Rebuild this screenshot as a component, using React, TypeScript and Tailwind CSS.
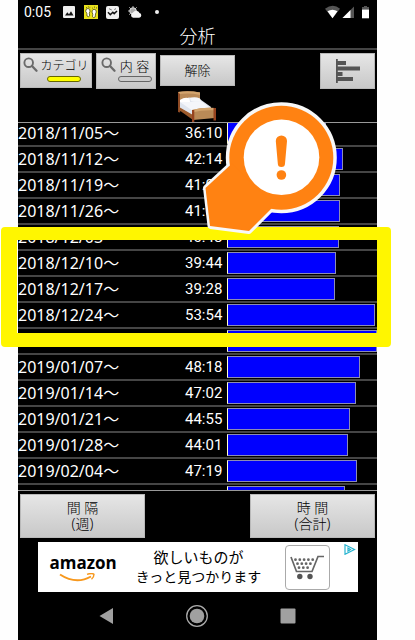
import React from "react";
import clsx from "clsx";

type WeekEntry = {
  date: string;
  time: string;
};

const weeks: WeekEntry[] = [
  { date: "2018/11/05", time: "36:10" },
  { date: "2018/11/12", time: "42:14" },
  { date: "2018/11/19", time: "41:02" },
  { date: "2018/11/26", time: "41:05" },
  { date: "2018/12/03", time: "40:48" },
  { date: "2018/12/10", time: "39:44" },
  { date: "2018/12/17", time: "39:28" },
  { date: "2018/12/24", time: "53:54" },
  { date: "2018/12/31", time: "54:36" },
  { date: "2019/01/07", time: "48:18" },
  { date: "2019/01/14", time: "47:02" },
  { date: "2019/01/21", time: "44:55" },
  { date: "2019/01/28", time: "44:01" },
  { date: "2019/02/04", time: "47:19" },
  { date: "2019/02/11", time: "42:59" },
];

const MAX_MINUTES = 3276;

const toMinutes = (time: string) => {
  const [hours, minutes] = time.split(":").map(Number);
  return hours * 60 + minutes;
};

const StatusBar = () => (
  <div className="flex h-6 items-center justify-between pl-1.5 pr-1.5 text-white">
    <div className="flex items-center">
      <span className="w-[39px] font-['Roboto'] text-sm leading-6">0:05</span>
      <svg width="12" height="12" viewBox="0 0 12 12">
        <rect width="12" height="12" rx="1" fill="#eee" />
        <path d="M2 9.5 4.3 6.3 6 8.2 8 5.3 10.5 9.5Z" fill="#111" />
      </svg>
      <svg className="ml-[9px]" width="14" height="14" viewBox="0 0 14 14">
        <rect width="14" height="14" fill="#e9e21c" />
        <g fill="#fff" stroke="#5d5a16" strokeWidth="0.9">
          <path d="M2 4.5Q4 2.5 5.7 4.3 6.5 6.5 5.3 8.2L5.7 11Q4.2 12.5 3 11L2.8 8.2Q1 6.5 2 4.5Z" />
          <path d="M8.3 5.3Q10 3.2 12 5.2 12.8 7 11.5 9L11.2 12Q9.7 13.3 8.5 11.8L8.8 9.2Q7.5 7 8.3 5.3Z" />
        </g>
        <path
          d="M2 2.6h.8M3.9 1.8h.8M5.6 2.4h.6M8.3 3.1h.6M10 2.2h.8M12 2.9h.8"
          stroke="#5d5a16"
          strokeWidth="1.2"
        />
      </svg>
      <svg className="ml-2" width="13" height="13" viewBox="0 0 13 13">
        <rect width="13" height="13" rx="2" fill="#eee" />
        <path
          d="M2 6.3 4.3 8.7 6.8 6.2 8.2 7.6 11 5"
          fill="none"
          stroke="#111"
          strokeWidth="1.5"
        />
        <path d="M3 2.7 5.8 4M8.3 3.5 10 2.7" stroke="#555" strokeWidth="0.8" />
      </svg>
      <svg className="ml-[9px]" width="14" height="13" viewBox="0 0 14 13">
        <circle cx="5" cy="5" r="3.3" fill="#aaa" stroke="#ddd" />
        <path
          d="M5 .2v1.2M.2 5h1.2M1.4 1.4l1 1M8.6 1.4l-1 1M1.3 8.5l1-.8"
          stroke="#ddd"
        />
        <path
          d="M5.2 11.8a2.8 2.8 0 0 1-.2-5.4 3.6 3.6 0 0 1 6.5.7 2.4 2.4 0 0 1-.3 4.7Z"
          fill="#f4f4f4"
        />
      </svg>
      <svg className="ml-[13px]" width="4" height="4" viewBox="0 0 4 4">
        <circle cx="2" cy="2" r="2" fill="#eee" />
      </svg>
    </div>
    <svg width="46" height="14" viewBox="0 0 46 14">
      <path d="M0 3.7Q8 -2 15 3.7L7.5 13.3Z" fill="#555" />
      <path d="M2.5 6.3Q7.5 3 12.5 6.3L7.5 13.3Z" fill="#fff" />
      <path d="M29 1.5V13H17.5Z" fill="#555" />
      <path d="M25.5 5V13H17.5Z" fill="#fff" />
      <path d="M37 4.5V2h2V1h3v1h2v2.5Z" fill="#555" />
      <path d="M37 4.5h7V13.3h-7Z" fill="#fff" />
    </svg>
  </div>
);

type GrayButtonProps = {
  children: React.ReactNode;
  className?: string;
  label?: string;
};

const GrayButton = ({ children, className, label }: GrayButtonProps) => (
  <button
    type="button"
    aria-label={label}
    className={clsx(
      "border border-[#b9b9b9] bg-gradient-to-b from-[#e6e6e6] to-[#c8c8c8] font-light text-black",
      className
    )}
  >
    {children}
  </button>
);

const SearchIcon = () => (
  <svg
    className="mt-[3px] shrink-0"
    width="15"
    height="15"
    viewBox="0 0 15 15"
    fill="none"
    stroke="#6b6b6b"
  >
    <circle cx="5.7" cy="5.7" r="4.3" strokeWidth="1.9" />
    <path d="M9 9 13.5 13.7" strokeWidth="2.3" strokeLinecap="round" />
  </svg>
);

const BedIcon = () => (
  <svg width="40" height="32" viewBox="0 0 40 32">
    <path d="M1 2Q12 .5 23 2.5V12L4 21 1 22Z" fill="#b98a57" />
    <path d="M1 2Q12 .5 23 2.5V5Q12 2.5 1 4.3Z" fill="#d3a56e" />
    <path d="M1 2V22l2 .6V4Z" fill="#8e4a24" />
    <path d="M3 10 12 7.5 22 8.5 34 17 33 21 16 26 3 18Z" fill="#dfe5ee" />
    <path d="M3 10Q8 6.5 12.5 8.5L13 12Q8 13 3 12Z" fill="#fff" />
    <path d="M13 8Q18 6.5 23 8.5L24 11Q18 12.5 14 11Z" fill="#f5f7fa" />
    <path d="M3 12 13 12 24 11 33 18 16 21Z" fill="#f4f6fa" />
    <path d="M2 17 16 25V30L2 20Z" fill="#9b5a2c" />
    <path d="M15 20Q26 17 38 18V28L16 30Z" fill="#b98a57" />
    <path d="M15 20Q26 17 38 18V20.3Q26 19.5 15 22.5Z" fill="#d3a56e" />
    <path d="M15 20h2.3V32H15ZM36.5 18H39V30.5h-2.5Z" fill="#96431f" />
  </svg>
);

const WeekRow = ({ date, time }: WeekEntry) => (
  <tr className="flex h-[26px] border-b-2 border-[#454545]">
    <th
      scope="row"
      className="flex-1 whitespace-nowrap text-left text-base font-normal leading-6"
    >
      {date}〜
    </th>
    <td className="w-[42px] font-['Roboto'] text-[15px] leading-6">{time}</td>
    <td className="w-[150px] py-px">
      <div
        className="h-[22px] border border-[#8c8cb4] border-l-[#ffffd0] bg-[#0000ff]"
        style={{ width: `${(toMinutes(time) / MAX_MINUTES) * 100}%` }}
      />
    </td>
  </tr>
);

const Pointer = () => (
  <svg
    className="absolute left-[200px] top-[98px]"
    width="142"
    height="142"
    viewBox="200 98 142 142"
  >
    <g stroke="#f8f8f8" strokeWidth="6" strokeLinejoin="round" fill="#f8f8f8">
      <circle cx="281.3" cy="157.7" r="52.5" />
      <path d="M232 164 206 188 210.5 226 249 231 272 208Z" />
    </g>
    <g fill="#ff8212">
      <circle cx="281.3" cy="157.7" r="52" />
      <path d="M232 163.5 205.5 188 210 226 249 231 274 206Z" />
    </g>
    <circle cx="281.5" cy="157.3" r="37.8" fill="#fff" />
    <path
      d="M275.8 141a5.6 5.6 0 0 1 11.2 0L285 163.5a3.6 3.6 0 0 1-7.2 0Z"
      fill="#ff8212"
    />
    <circle cx="281.4" cy="175" r="4.8" fill="#ff8212" />
  </svg>
);

const AdBanner = () => (
  <a
    href="#ad"
    className="mx-auto flex h-[50px] w-80 items-center bg-white pl-3 text-black"
  >
    <span className="flex w-[70px] flex-col">
      <span className="font-['Open_Sans'] text-[17px] font-bold leading-5">
        amazon
      </span>
      <svg width="50" height="9" viewBox="-8 0 50 9" fill="none" stroke="#f7981d">
        <path d="M2 1.5Q18 12 33 3.5" strokeWidth="2" />
        <path d="M29 1.3Q34-.3 36 1.3 36 4 33.5 6.3" strokeWidth="1.4" />
      </svg>
    </span>
    <span className="flex w-[158px] flex-col items-center whitespace-nowrap text-sm leading-5">
      <span className="text-[15px]">欲しいものが</span>
      <span>きっと見つかります</span>
    </span>
    <span className="ml-[7px] flex h-[45px] w-[45px] items-center justify-center rounded border border-[#aaa]">
      <svg width="35" height="26" viewBox="0 0 35 26">
        <path
          d="M1 3 6.5 17.5H22L28 2.5H34"
          fill="none"
          stroke="#666"
          strokeWidth="1.7"
        />
        <path
          d="M5.5 5.7H25M7.5 9.7H23M9 13.7H21.5"
          stroke="#666"
          strokeWidth="2.8"
          strokeLinecap="round"
          strokeDasharray="0 4.3"
        />
        <circle cx="9.8" cy="22.5" r="2.7" fill="#555" />
        <circle cx="20" cy="22.5" r="2.7" fill="#555" />
      </svg>
    </span>
    <svg
      className="ml-3.5 mt-0.5 self-start"
      width="12"
      height="11"
      viewBox="0 0 12 11"
      fill="none"
      stroke="#28b4d0"
      strokeWidth="1.2"
    >
      <path d="M1 .8 10.5 5.5 1 10.3Z" />
      <path d="M4 4V7.2L6.5 5.6Z" />
    </svg>
  </a>
);

const NavBar = () => (
  <nav className="flex flex-1 items-center justify-between pl-20 pr-[81px]">
    <button type="button" aria-label="Back">
      <svg width="16" height="18" viewBox="0 0 16 18">
        <path d="M15 1V17L1.5 9Z" fill="#a0a0a0" />
      </svg>
    </button>
    <button type="button" aria-label="Home">
      <svg width="24" height="24" viewBox="0 0 24 24">
        <circle cx="12" cy="12" r="10.3" fill="none" stroke="#aaa" strokeWidth="1.3" />
        <circle cx="12" cy="12" r="7.3" fill="#a0a0a0" />
      </svg>
    </button>
    <button type="button" aria-label="Recent apps">
      <svg width="16" height="16" viewBox="0 0 16 16">
        <rect x=".5" y=".5" width="15" height="15" rx="1" fill="#a0a0a0" />
      </svg>
    </button>
  </nav>
);

const App = () => {
  return (
    <div className="relative min-h-screen bg-[#fefefe] pl-[18px] pr-[38px] font-['Noto_Sans','Noto_Sans_CJK_JP',sans-serif]">
      <div className="flex min-h-screen flex-col bg-black text-white">
        <StatusBar />
        <h1 className="h-6 text-center text-lg font-light leading-6">分析</h1>

        {/* Filters */}
        <div className="flex h-[41px] items-start border-t-2 border-[#444] px-0.5 pt-[3px]">
          <GrayButton className="flex h-[35px] w-[72px] items-start justify-center gap-0.5">
            <SearchIcon />
            <span className="flex flex-col items-center whitespace-nowrap pt-1 text-xs leading-4">
              カテゴリ
              <span className="mt-0.5 h-1.5 w-[34px] rounded-sm border border-[#666600] bg-[#ffff00]" />
            </span>
          </GrayButton>
          <GrayButton className="ml-1 flex h-9 w-[60px] items-start justify-center gap-0.5">
            <SearchIcon />
            <span className="flex flex-col items-center whitespace-nowrap pt-1 text-[13px] leading-4">
              内 容
              <span className="mt-0.5 h-1.5 w-[34px] rounded-sm border border-[#666] bg-[#ccc]" />
            </span>
          </GrayButton>
          <GrayButton className="ml-1 mt-0.5 h-[31px] w-[75px] text-[13px]">
            解除
          </GrayButton>
          <GrayButton
            label="グラフ"
            className="ml-auto flex h-[36px] w-[55px] items-center justify-center"
          >
            <svg width="26" height="24" viewBox="0 0 26 24" fill="#555">
              <path d="M1 0h1.8v24H1ZM2 2h9v4H2ZM2 7.5h23v4H2ZM2 13h5.5v4H2ZM2 18h16v4H2Z" />
            </svg>
          </GrayButton>
        </div>

        <div className="flex h-[34px] items-end border-b border-[#999] pl-[159px]">
          <BedIcon />
        </div>

        {/* Weekly totals, scrolled slightly past the first row */}
        <div className="h-[367px] overflow-hidden">
          <table className="-mt-0.5 block w-full">
            <tbody className="block">
              {weeks.map((week) => (
                <WeekRow key={week.date} date={week.date} time={week.time} />
              ))}
            </tbody>
          </table>
        </div>

        <div className="flex h-[52px] justify-between border-t border-[#999] px-0.5 pt-[3px]">
          <GrayButton className="h-11 w-[125px] text-sm leading-4">
            間 隔
            <br />
            (週)
          </GrayButton>
          <GrayButton className="h-11 w-[125px] text-sm leading-4">
            時 間
            <br />
            (合計)
          </GrayButton>
        </div>

        <AdBanner />
        <NavBar />
      </div>

      {/* Highlight frame */}
      <div className="absolute left-px right-6 top-[227px] h-[120px] rounded border-b-[14px] border-l-[16px] border-r-[14px] border-t-[13px] border-[#fff600]" />
      <Pointer />
    </div>
  );
};

export default App;
